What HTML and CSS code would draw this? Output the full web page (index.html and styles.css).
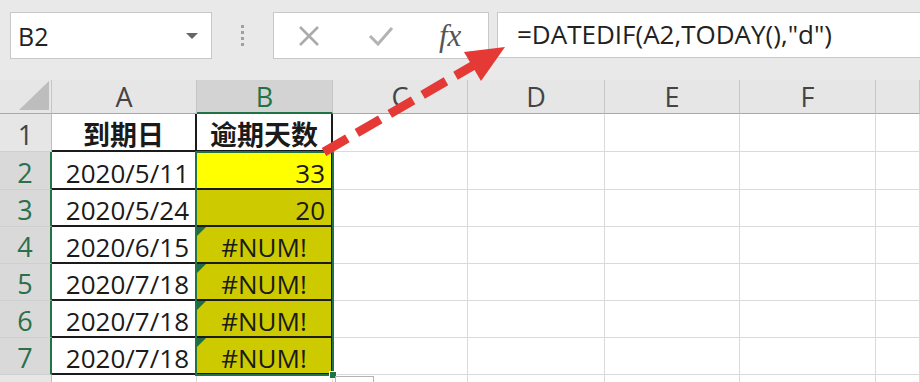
FILE: index.html
```html
<!DOCTYPE html>
<html lang="zh">
<head>
  <meta charset="UTF-8" />
  <title>DATEDIF 逾期天数</title>
  <link rel="stylesheet" href="styles.css">
</head>
<body>
  <div class="toolbar">
    <div class="namebox"><span>B2</span><span class="caret"></span></div>
    <div class="grip"><i></i><i></i><i></i><i></i></div>
    <div class="fxbox">
      <svg class="ico-x" width="22" height="20" viewBox="0 0 22 20"><path d="M2 1 L20 19 M20 1 L2 19" stroke="#ababab" stroke-width="2.6" fill="none"/></svg>
      <svg class="ico-ok" width="26" height="20" viewBox="0 0 26 20"><path d="M2 10 L10 18 L24 2" stroke="#b3b3b3" stroke-width="3" fill="none"/></svg>
      <span class="fx">fx</span>
    </div>
    <div class="formula">=DATEDIF(A2,TODAY(),"d")</div>
  </div>

  <div class="sheet">
    <div class="corner"></div>
    <div class="ch">A</div>
    <div class="ch sel">B</div>
    <div class="ch">C</div>
    <div class="ch">D</div>
    <div class="ch">E</div>
    <div class="ch">F</div>
    <div class="ch"></div>

    <div class="rh">1</div>
    <div class="c d title">到期日</div>
    <div class="c d title">逾期天数</div>
    <div class="c"></div><div class="c"></div><div class="c"></div><div class="c"></div><div class="c"></div>

    <div class="rh sel">2</div>
    <div class="c d num">2020/5/11</div>
    <div class="c d num active">33</div>
    <div class="c"></div><div class="c"></div><div class="c"></div><div class="c"></div><div class="c"></div>

    <div class="rh sel">3</div>
    <div class="c d num">2020/5/24</div>
    <div class="c d num fill">20</div>
    <div class="c"></div><div class="c"></div><div class="c"></div><div class="c"></div><div class="c"></div>

    <div class="rh sel">4</div>
    <div class="c d num">2020/6/15</div>
    <div class="c d fill err">#NUM!</div>
    <div class="c"></div><div class="c"></div><div class="c"></div><div class="c"></div><div class="c"></div>

    <div class="rh sel">5</div>
    <div class="c d num">2020/7/18</div>
    <div class="c d fill err">#NUM!</div>
    <div class="c"></div><div class="c"></div><div class="c"></div><div class="c"></div><div class="c"></div>

    <div class="rh sel">6</div>
    <div class="c d num">2020/7/18</div>
    <div class="c d fill err">#NUM!</div>
    <div class="c"></div><div class="c"></div><div class="c"></div><div class="c"></div><div class="c"></div>

    <div class="rh sel">7</div>
    <div class="c d num">2020/7/18</div>
    <div class="c d fill err">#NUM!</div>
    <div class="c"></div><div class="c"></div><div class="c"></div><div class="c"></div><div class="c"></div>

    <div class="rh"></div>
    <div class="c"></div><div class="c"></div><div class="c"></div><div class="c"></div><div class="c"></div><div class="c"></div><div class="c"></div>

    <div class="selection"><span class="handle"></span><span class="quick"></span></div>
  </div>

  <!-- 红色虚线箭头指向编辑栏 -->
  <svg class="arrow" width="920" height="382" viewBox="0 0 920 382">
    <line x1="324" y1="152" x2="474" y2="65" stroke="#e53935" stroke-width="9" stroke-dasharray="27 11"/>
    <polygon points="505,47 464,52 481,81" fill="#e53935"/>
  </svg>
</body>
</html>
```

FILE: styles.css
```css
* {
  box-sizing: border-box;
}

body {
  margin: 0;
  width: 920px;
  height: 382px;
  overflow: hidden;
  position: relative;
  background: #fff;
  font-family: 'Open Sans', 'Noto Sans CJK SC', sans-serif;
  color: #1a1a1a;
}

/* 编辑栏 */
.toolbar {
  display: flex;
  align-items: flex-start;
  height: 80px;
  padding: 12px 0 0 10px;
  background: #e9e9e9;
}

.namebox {
  display: flex;
  align-items: center;
  width: 202px;
  height: 47px;
  padding: 0 13px 0 7px;
  background: #fff;
  border: 1px solid #c8c8c8;
  font-size: 25px;
  color: #222;
}

.namebox .caret {
  margin-left: auto;
  border-left: 6px solid transparent;
  border-right: 6px solid transparent;
  border-top: 6px solid #666;
}

.grip {
  display: flex;
  flex-direction: column;
  align-items: center;
  justify-content: center;
  gap: 3px;
  width: 61px;
  height: 47px;
}

.grip i {
  width: 3px;
  height: 3px;
  background: #a0a0a0;
}

.fxbox {
  display: flex;
  align-items: center;
  width: 216px;
  height: 47px;
  background: #fff;
  border: 1px solid #c8c8c8;
}

.ico-x {
  margin-left: 24px;
}

.ico-ok {
  margin-left: 48px;
}

.fx {
  margin-left: 45px;
  font-family: 'Liberation Serif', serif;
  font-style: italic;
  font-size: 31px;
  color: #555;
  line-height: 1;
}

.formula {
  flex: 1;
  height: 46px;
  margin-left: 8px;
  padding-left: 19px;
  background: #fff;
  border: 1px solid #c8c8c8;
  border-right: none;
  font-size: 26px;
  line-height: 43px;
  color: #222;
  white-space: nowrap;
}

/* 表格 */
.sheet {
  position: relative;
  display: grid;
  grid-template-columns: 52px 145px 136px 135px 137px 135px 136px 1fr;
  grid-template-rows: 34px 38px 38px repeat(6, 37px);
}

.corner {
  position: relative;
  background: #e6e6e6;
  border-right: 1px solid #c6c6c6;
  border-bottom: 1px solid #a8a8a8;
}

.corner::after {
  content: "";
  position: absolute;
  right: 2px;
  bottom: 3px;
  width: 30px;
  height: 29px;
  background: #bdbdbd;
  clip-path: polygon(100% 0, 100% 100%, 0 100%);
}

.ch {
  display: flex;
  align-items: center;
  justify-content: center;
  background: #e6e6e6;
  border-right: 1px solid #c6c6c6;
  border-bottom: 1px solid #a8a8a8;
  font-size: 27px;
  color: #444;
}

.ch.sel {
  background: #d3d3d3;
  border-bottom: 2px solid #217346;
  color: #217346;
}

.rh {
  display: flex;
  align-items: center;
  justify-content: center;
  padding-top: 3px;
  background: #e6e6e6;
  border-right: 1px solid #bdbdbd;
  border-bottom: 1px solid #cfcfcf;
  font-size: 27px;
  color: #444;
}

.rh.sel {
  background: #d9d9d9;
  border-right: 2px solid #217346;
  color: #2b6f4b;
}

.c {
  display: flex;
  align-items: center;
  justify-content: center;
  padding: 5px 6px 0;
  border-right: 1px solid #dadada;
  border-bottom: 1px solid #dadada;
  font-size: 26px;
  white-space: nowrap;
}

.c.d {
  border-right: 2px solid #1b1b1b;
  border-bottom: 2px solid #1b1b1b;
}

.c.title {
  padding-top: 3px;
  font-weight: 700;
  font-size: 27px;
}

.c.num {
  justify-content: flex-end;
}

.c.active {
  background: #ffff00;
}

.c.fill {
  background: #cdca00;
}

.c.err {
  position: relative;
}

.c.err::before {
  content: "";
  position: absolute;
  top: 0;
  left: 0;
  border-top: 9px solid #1e6e42;
  border-right: 9px solid transparent;
}

.selection {
  position: absolute;
  grid-column: 3 / 4;
  grid-row: 3 / 9;
  top: -1px;
  left: -2px;
  right: -1px;
  bottom: -1px;
  border: 2px solid #217346;
  pointer-events: none;
}

.handle {
  position: absolute;
  right: -5px;
  bottom: -5px;
  width: 8px;
  height: 8px;
  background: #217346;
  border: 1px solid #fff;
}

.quick {
  position: absolute;
  left: calc(100% + 3px);
  top: calc(100% + 2px);
  width: 39px;
  height: 20px;
  background: #fff;
  border: 1px solid #b4b4b4;
}

.arrow {
  position: absolute;
  top: 0;
  left: 0;
  pointer-events: none;
}
```
